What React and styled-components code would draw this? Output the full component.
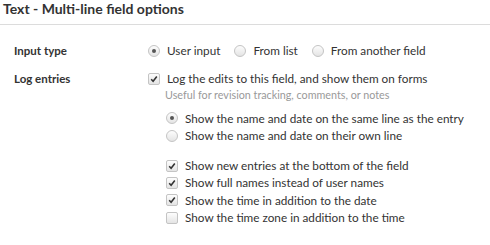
import React from 'react';
import styled, {createGlobalStyle} from 'styled-components';

const Global = createGlobalStyle`
  html, body { margin: 0; padding: 0; background: #fff; }
  body { font-family: Lato, "Open Sans", sans-serif; color: #333; }
`;

const Page = styled.div`
  width: 490px;
`;

const Header = styled.div`
  height: 25px;
  border-bottom: 1px solid #dcdcdc;
  padding: 1px 0 0 3px;
  box-sizing: border-box;
  font-size: 14px;
  font-weight: 700;
  color: #333;
  line-height: 16px;
`;

const Form = styled.div`
  padding: 17px 0 0 14px;
  display: flex;
  flex-direction: column;
  gap: 11px;
`;

const Row = styled.div`
  display: flex;
  align-items: flex-start;
`;

const Label = styled.div`
  width: 134px;
  font-size: 11.5px;
  font-weight: 700;
  line-height: 17px;
  color: #333;
`;

const Controls = styled.div`
  display: flex;
  flex-direction: column;
`;

const Inline = styled.div`
  display: flex;
  gap: 14px;
`;

const Option = styled.label`
  display: flex;
  align-items: center;
  gap: 7px;
  font-size: 11.75px;
  line-height: 17.3px;
  color: #333;
  white-space: nowrap;
`;

const Radio = styled.span`
  width: 10px;
  height: 10px;
  border-radius: 50%;
  border: 1px solid #c4c4c4;
  background: linear-gradient(#fdfdfd, #e4e4e4);
  display: flex;
  align-items: center;
  justify-content: center;
  flex-shrink: 0;
  &::after {
    content: '';
    width: 4px;
    height: 4px;
    border-radius: 50%;
    background: ${p => (p.$on ? '#555' : 'transparent')};
  }
`;

const Box = styled.span`
  width: 10px;
  height: 10px;
  border-radius: 2px;
  border: 1px solid #c4c4c4;
  background: linear-gradient(#fdfdfd, #e4e4e4);
  flex-shrink: 0;
  display: flex;
  align-items: center;
  justify-content: center;
  svg { display: ${p => (p.$on ? 'block' : 'none')}; }
`;

const Hint = styled.div`
  font-size: 10.75px;
  line-height: 14px;
  color: #999;
  padding-left: 17px;
`;

const Nested = styled.div`
  padding-left: 18px;
  display: flex;
  flex-direction: column;
  margin-top: ${p => p.$top}px;
`;

function Check({on, children}) {
  return (
    <Option>
      <Box $on={on}>
        <svg width="8" height="8" viewBox="0 0 8 8">
          <path d="M1.2 4.3 L3.1 6.2 L6.8 1.6" fill="none" stroke="#333" strokeWidth="1.6" />
        </svg>
      </Box>
      {children}
    </Option>
  );
}

function RadioOpt({on, children}) {
  return (
    <Option>
      <Radio $on={on} />
      {children}
    </Option>
  );
}

export default function App() {
  return (
    <Page>
      <Global />
      <Header>Text - Multi-line field options</Header>
      <Form>
        <Row>
          <Label>Input type</Label>
          <Inline>
            <RadioOpt on>User input</RadioOpt>
            <RadioOpt>From list</RadioOpt>
            <RadioOpt>From another field</RadioOpt>
          </Inline>
        </Row>
        <Row>
          <Label>Log entries</Label>
          <Controls>
            <Check on>Log the edits to this field, and show them on forms</Check>
            <Hint>Useful for revision tracking, comments, or notes</Hint>
            <Nested $top={8}>
              <RadioOpt on>Show the name and date on the same line as the entry</RadioOpt>
              <RadioOpt>Show the name and date on their own line</RadioOpt>
            </Nested>
            <Nested $top={13}>
              <Check on>Show new entries at the bottom of the field</Check>
              <Check on>Show full names instead of user names</Check>
              <Check on>Show the time in addition to the date</Check>
              <Check>Show the time zone in addition to the time</Check>
            </Nested>
          </Controls>
        </Row>
      </Form>
    </Page>
  );
}
